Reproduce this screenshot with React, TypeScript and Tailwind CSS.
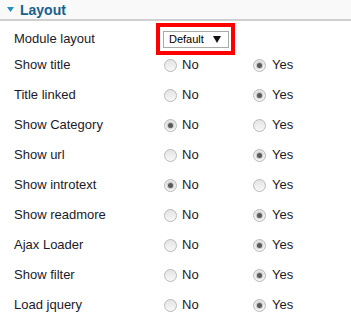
import React from "react";

const rows: { label: string; yes: boolean }[] = [
  { label: "Show title", yes: true },
  { label: "Title linked", yes: true },
  { label: "Show Category", yes: false },
  { label: "Show url", yes: true },
  { label: "Show introtext", yes: false },
  { label: "Show readmore", yes: true },
  { label: "Ajax Loader", yes: true },
  { label: "Show filter", yes: true },
  { label: "Load jquery", yes: true },
];

function Radio({ checked }: { checked: boolean }) {
  return (
    <span className="relative inline-block w-[13px] h-[13px] rounded-full border border-[#b9b9b9] bg-gradient-to-b from-[#e4e4e4] to-[#f8f8f8] shrink-0">
      {checked && (
        <span className="absolute left-[3px] top-[3px] w-[5px] h-[5px] rounded-full bg-[#5a5a5a] shadow-[0_0_1px_1px_rgba(120,120,120,0.35)]" />
      )}
    </span>
  );
}

export default function App() {
  return (
    <div
      className="w-[351px] h-[334px] bg-white text-[13px] text-[#1a1a2a]"
      style={{ fontFamily: '"Liberation Sans", Arial, sans-serif' }}
    >
      <div className="h-[21px] bg-[#f9f9f9] border-b-2 border-[#cfcfcf] flex items-center pl-[7px]">
        <svg width="7" height="5" viewBox="0 0 7 5" className="mr-[6px]">
          <polygon points="0,0 7,0 3.5,5" fill="#2b8bc6" />
        </svg>
        <span className="text-[14px] font-bold text-[#17608f] leading-none">Layout</span>
      </div>
      <div className="flex items-center h-[32px] mt-[2px]">
        <span className="w-[156px] pl-[14px]">Module layout</span>
        <div className="w-[79px] h-[32px] border-[4px] border-[#ff0000] flex items-center pl-[3px]">
          <div className="w-[66px] h-[17px] border border-[#aaa] bg-white flex items-center justify-between pl-[5px] pr-[7px] text-[11px] text-black">
            <span>Default</span>
            <svg width="8" height="7" viewBox="0 0 8 7">
              <polygon points="0,0 8,0 4,7" fill="#111" />
            </svg>
          </div>
        </div>
      </div>
      <div className="flex flex-col -mt-[5px]">
        {rows.map((r) => (
          <div key={r.label} className="flex items-center h-[30px]">
            <span className="w-[164px] pl-[14px]">{r.label}</span>
            <div className="w-[89px] flex items-center">
              <Radio checked={!r.yes} />
              <span className="ml-[5px]">No</span>
            </div>
            <div className="flex items-center">
              <Radio checked={r.yes} />
              <span className="ml-[6px]">Yes</span>
            </div>
          </div>
        ))}
      </div>
    </div>
  );
}
